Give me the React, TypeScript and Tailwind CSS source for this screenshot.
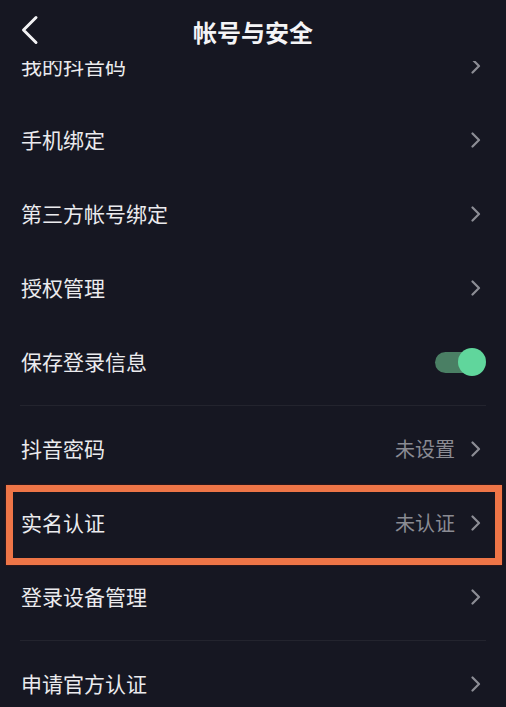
import React from 'react';

type Item = {
    label: string;
    value?: string;
    toggle?: boolean;
    marked?: boolean;
};

const groups: Item[][] = [
    [
        { label: '我的抖音码' },
        { label: '手机绑定' },
        { label: '第三方帐号绑定' },
        { label: '授权管理' },
        { label: '保存登录信息', toggle: true },
    ],
    [
        { label: '抖音密码', value: '未设置' },
        { label: '实名认证', value: '未认证', marked: true },
        { label: '登录设备管理' },
    ],
    [{ label: '申请官方认证' }],
];

function Chevron() {
    return (
        <svg width="10" height="16" viewBox="0 0 10 16" fill="none">
            <path d="M1.5 1.5 L8 8 L1.5 14.5" stroke="#8c8d95" strokeWidth="2.2" strokeLinecap="round" strokeLinejoin="round" />
        </svg>
    );
}

function Toggle() {
    return (
        <div className="relative w-[52px] h-[30px] flex items-center">
            <div className="w-[46px] h-[21px] rounded-full bg-[#4a7f64] ml-[1px]" />
            <div className="absolute right-0 top-[1px] w-[28px] h-[28px] rounded-full bg-[#60d69c]" />
        </div>
    );
}

function Row({ item }: { item: Item }) {
    return (
        <div className="relative h-[74px] flex items-center justify-between pl-[21px] pr-[25px]">
            <span className="text-[21px] text-[#ebebee]">{item.label}</span>
            {item.toggle ? (
                <div className="mr-[-5px]"><Toggle /></div>
            ) : (
                <div className="flex items-center gap-[16px]">
                    {item.value && <span className="text-[20px] text-[#8a8b93]">{item.value}</span>}
                    <Chevron />
                </div>
            )}
            {item.marked && (
                <div className="absolute left-[6px] right-[4px] top-[-1px] bottom-[-5px] border-[7px] border-[#ee7547] shadow-[0_0_2px_#5a1a10]" />
            )}
        </div>
    );
}

export default function App() {
    return (
        <div
            className="w-[506px] h-[707px] bg-[#161722] flex flex-col overflow-hidden"
            style={{ fontFamily: '"Noto Sans CJK SC", "Noto Sans", sans-serif' }}
        >
            <div className="relative z-10 h-[61px] shrink-0 bg-[#161722] flex items-center justify-center">
                <svg className="absolute left-[20px] top-[15px]" width="20" height="30" viewBox="0 0 20 30" fill="none">
                    <path d="M16 2.5 L3.5 15 L16 27.5" stroke="#f2f2f4" strokeWidth="3" strokeLinecap="round" strokeLinejoin="round" />
                </svg>
                <span className="text-[24px] font-semibold text-[#f4f4f6] mb-[-2px]">帐号与安全</span>
            </div>
            <div className="flex-1 overflow-hidden">
                <div className="-mt-[32px] flex flex-col">
                    {groups.map((group, gi) => (
                        <div key={gi} className="flex flex-col">
                            {gi > 0 && (
                                <div className="py-[6px] px-[20px]">
                                    <div className="h-px bg-[#23242e]" />
                                </div>
                            )}
                            {group.map(item => (
                                <Row key={item.label} item={item} />
                            ))}
                        </div>
                    ))}
                </div>
            </div>
        </div>
    );
}
